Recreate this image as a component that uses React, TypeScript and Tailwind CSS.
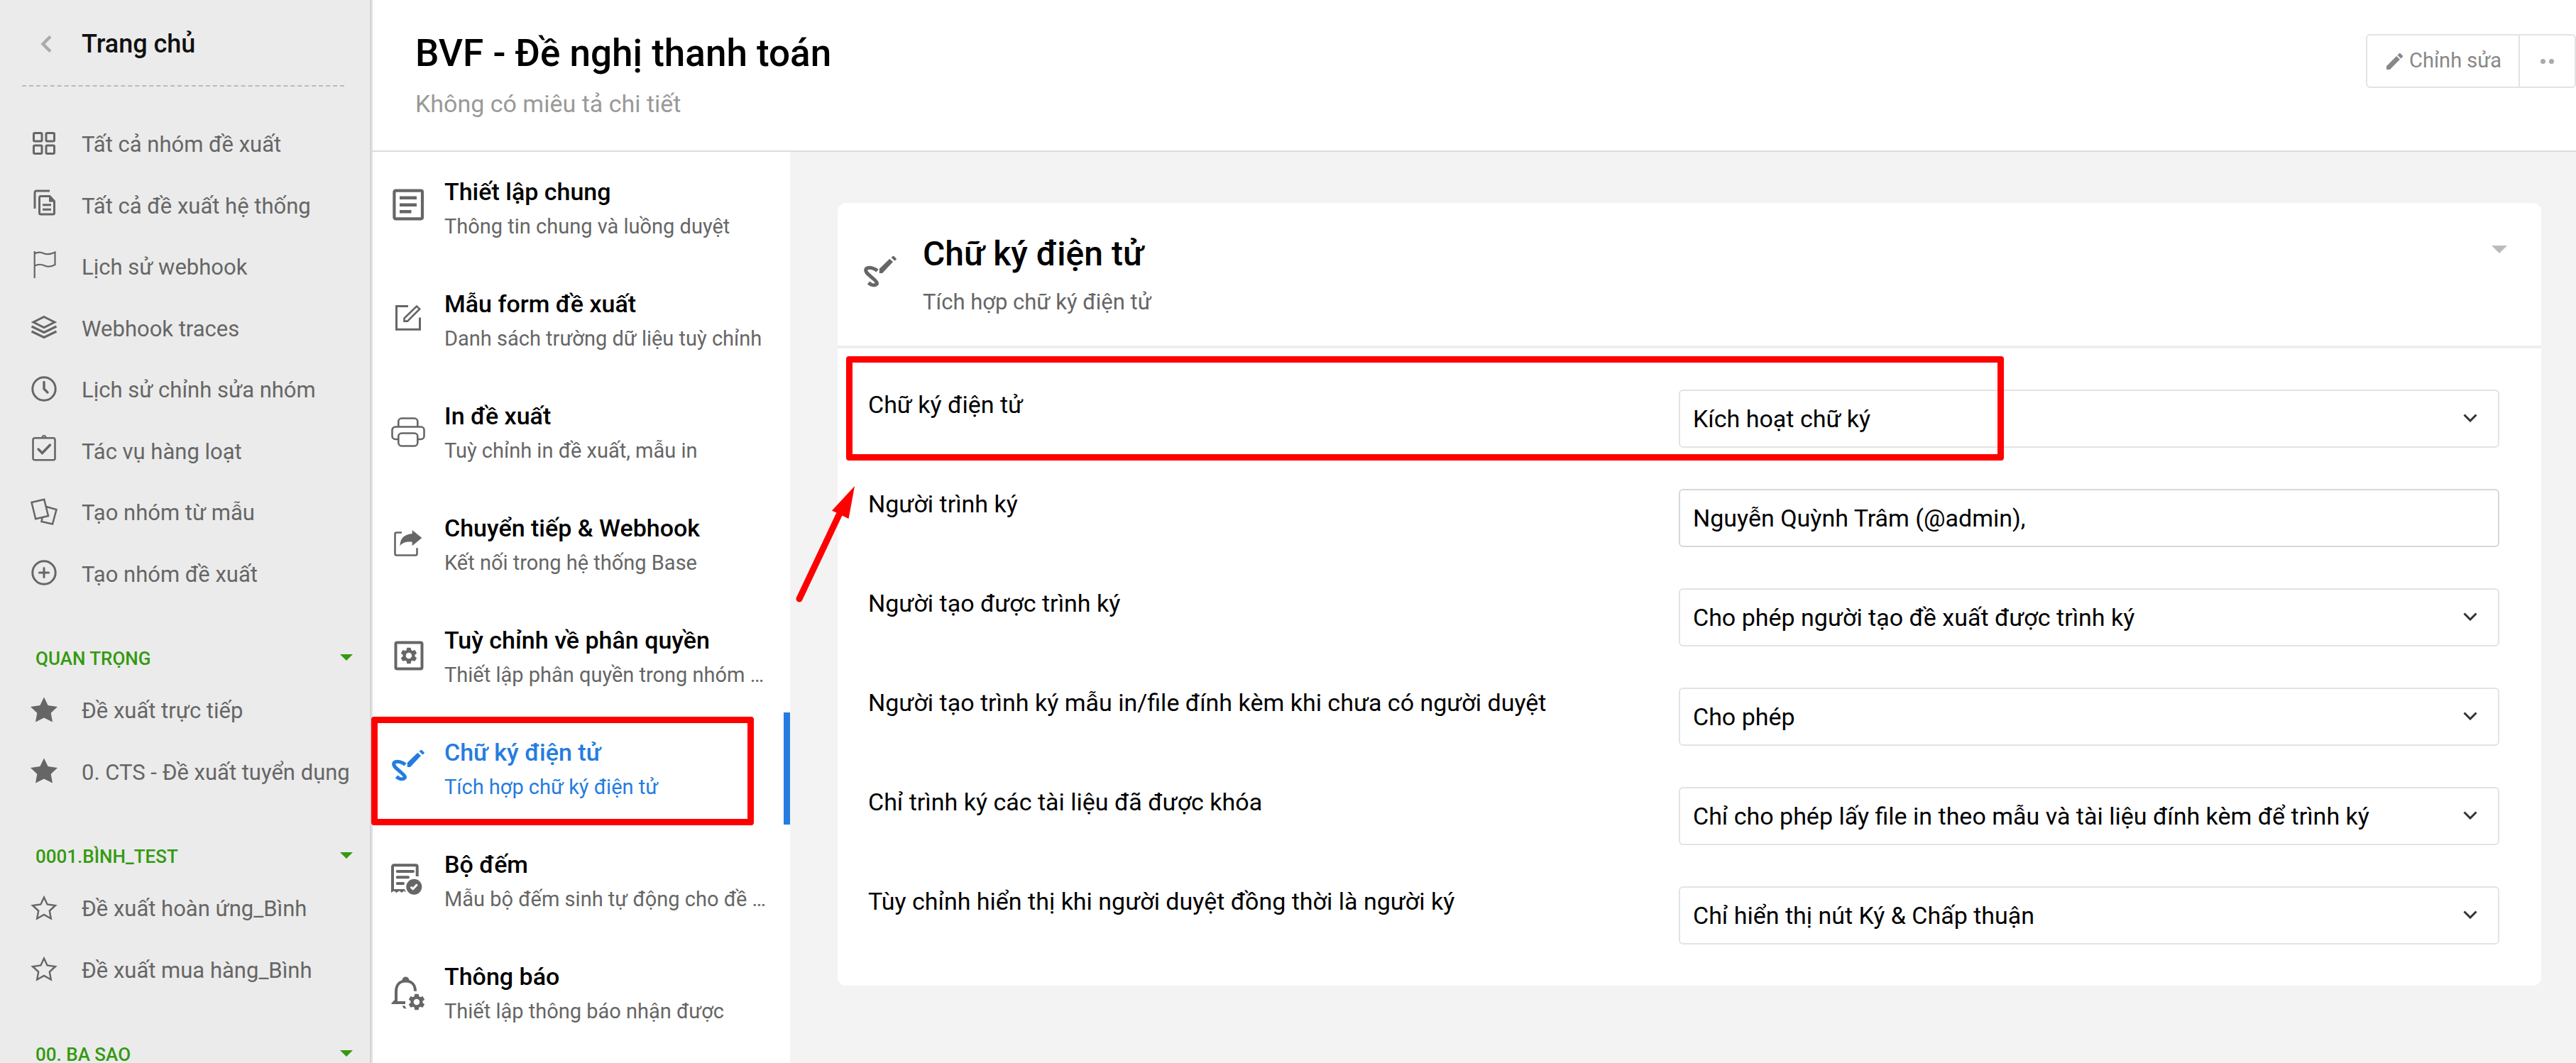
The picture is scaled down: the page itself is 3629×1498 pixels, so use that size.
import { useId, useState } from "react";
import type { ReactNode } from "react";

const GEAR_PATH =
  "M19.14 12.94c.04-.3.06-.61.06-.94 0-.32-.02-.64-.07-.94l2.03-1.58c.18-.14.23-.41.12-.61l-1.92-3.32c-.12-.22-.37-.29-.59-.22l-2.39.96c-.5-.38-1.03-.7-1.62-.94l-.36-2.54c-.04-.24-.24-.41-.48-.41h-3.84c-.24 0-.43.17-.47.41l-.36 2.54c-.59.24-1.13.57-1.62.94l-2.39-.96c-.22-.08-.47 0-.59.22L2.74 8.87c-.12.21-.08.47.12.61l2.03 1.58c-.05.3-.09.63-.09.94s.02.64.07.94l-2.03 1.58c-.18.14-.23.41-.12.61l1.92 3.32c.12.22.37.29.59.22l2.39-.96c.5.38 1.03.7 1.62.94l.36 2.54c.05.24.24.41.48.41h3.84c.24 0 .44-.17.47-.41l.36-2.54c.59-.24 1.13-.56 1.62-.94l2.39.96c.22.08.47 0 .59-.22l1.92-3.32c.12-.22.07-.47-.12-.61l-2.01-1.58zM12 15.6c-1.98 0-3.6-1.62-3.6-3.6s1.62-3.6 3.6-3.6 3.6 1.62 3.6 3.6-1.62 3.6-3.6 3.6z";

const STAR_PATH = "M19 1.5 24.6 13 38 15 28.7 23.8 31 36.5 19 30.4 7 36.5 9.3 23.8 0 15 13.4 13Z";
const STAR_OUTLINE_PATH = "M19 4.5 23.6 14.5 35 16 26.8 23.5 28.8 34.500 19 29 9.200 34.500 11.200 23.500 3 16 14.400 14.500Z";

function MenuIcon({ children }: { children: ReactNode }) {
  return (
    <svg viewBox="0 0 38 38" className="mb-[5px] size-[38px] shrink-0 overflow-visible" fill="none" stroke="currentColor" strokeWidth="3" aria-hidden="true">
      {children}
    </svg>
  );
}

function TabIcon({ children }: { children: ReactNode }) {
  return (
    <svg viewBox="0 0 48 48" className="size-12 shrink-0 overflow-visible" fill="none" stroke="currentColor" strokeWidth="2.6" aria-hidden="true">
      {children}
    </svg>
  );
}

function SignatureIcon() {
  return (
    <TabIcon>
      <path d="M20 22.5C16 19 8 16.5 4.5 19.5C1 24 9 29 14 33.5C18 37 21 40 18.5 41.8C15.5 44 11 42.5 7.5 39.5" strokeWidth="5" />
      <path d="M22.8 26V19.7L37.3 5.8 42 10 27 26Z" fill="currentColor" stroke="none" />
      <path d="M39.6 4 41.7 2.1Q42.5 1.5 43.2 2.1L46.6 5.2Q47.2 6 46.6 6.7L44.5 8.5Z" fill="currentColor" stroke="none" />
    </TabIcon>
  );
}

const MENU = [
  {
    label: "Tất cả nhóm đề xuất",
    icon: (
      <MenuIcon>
        <rect x="4.5" y="4.5" width="11.5" height="11.5" rx="1.5" />
        <rect x="22" y="4.5" width="11.5" height="11.5" rx="1.5" />
        <rect x="4.5" y="22" width="11.5" height="11.5" rx="1.5" />
        <rect x="22" y="22" width="11.5" height="11.5" rx="1.5" />
      </MenuIcon>
    ),
  },
  {
    label: "Tất cả đề xuất hệ thống",
    icon: (
      <MenuIcon>
        <path d="M6 25V2.500a2.500 2.500 0 0 1 2.500-2.500H27" />
        <path d="M14.500 7.500H27l6.500 7V31a2 2 0 0 1-2 2h-17a2 2 0 0 1-2-2V9.500a2 2 0 0 1 2-2Z" />
        <path d="M26 6.500v9h9Z" fill="currentColor" stroke="none" />
        <path d="M17 19.700h12M17 26.300h12" />
      </MenuIcon>
    ),
  },
  {
    label: "Lịch sử webhook",
    icon: (
      <MenuIcon>
        <path d="M5.700 -2V36M5.700 1.500C10 -1 14 -1 19 1.200S28 2.500 34.500 -.5V17C28 20.500 24 20.500 19.500 18.300S10 16.500 5.700 18.500" strokeWidth="2.200" />
      </MenuIcon>
    ),
  },
  {
    label: "Webhook traces",
    icon: (
      <MenuIcon>
        <path d="M19 4.500 34 12 19 19.500 4 12Z" />
        <path d="M1.500 18 19 26.500 36.500 18M1.500 25 19 33.500 36.500 25" strokeWidth="3.200" />
      </MenuIcon>
    ),
  },
  {
    label: "Lịch sử chỉnh sửa nhóm",
    icon: (
      <MenuIcon>
        <circle cx="19" cy="19" r="16.200" />
        <path d="M19 9.500V19l5 5" strokeWidth="3.400" strokeLinecap="round" />
      </MenuIcon>
    ),
  },
  {
    label: "Tác vụ hàng loạt",
    icon: (
      <MenuIcon>
        <rect x="3.500" y="2.200" width="31" height="31" rx="2.500" strokeWidth="2.600" />
        <path d="M16.500 1.500a2.500 2.500 0 0 1 5 0" strokeWidth="2" />
        <path d="M11 18l5.500 5.500L27.500 12" strokeWidth="3.400" strokeLinecap="round" />
      </MenuIcon>
    ),
  },
  {
    label: "Tạo nhóm từ mẫu",
    icon: (
      <MenuIcon>
        <path d="M1.500 6 19.200 1.800 25 25 7.200 29.200Z" strokeWidth="2.500" />
        <path d="M22 12 36.500 16 31 36.500 15.500 33 16.500 27.500" strokeWidth="2.500" />
      </MenuIcon>
    ),
  },
  {
    label: "Tạo nhóm đề xuất",
    icon: (
      <MenuIcon>
        <circle cx="19" cy="19" r="16.200" />
        <path d="M19 12.500v13M12.500 19h13" strokeLinecap="round" />
      </MenuIcon>
    ),
  },
];

const GROUPS = [
  { title: "QUAN TRỌNG", starred: true, items: ["Đề xuất trực tiếp", "0. CTS - Đề xuất tuyển dụng"] },
  { title: "0001.BÌNH_TEST", starred: false, items: ["Đề xuất hoàn ứng_Bình", "Đề xuất mua hàng_Bình"] },
  { title: "00. BA SAO", starred: false, items: [] },
];

const TABS = [
  {
    title: "Thiết lập chung",
    description: "Thông tin chung và luồng duyệt",
    icon: (
      <TabIcon>
        <rect x="4.400" y="3.700" width="39.600" height="39.600" rx="2" strokeWidth="4.200" />
        <path d="M12 13.700h24M12 23.700h24M12 33.300h16.500" strokeWidth="4.600" />
      </TabIcon>
    ),
  },
  {
    title: "Mẫu form đề xuất",
    description: "Danh sách trường dữ liệu tuỳ chỉnh",
    icon: (
      <TabIcon>
        <path d="M24 8.500H7.500V41.200H40.500V24.500" strokeWidth="3" />
        <path d="M18.500 25.500 36 8.500 40.200 12.500 23 29.600H18.500Z" />
      </TabIcon>
    ),
  },
  {
    title: "In đề xuất",
    description: "Tuỳ chỉnh in đề xuất, mẫu in",
    icon: (
      <TabIcon>
        <path d="M10.300 20V13a4.500 4.500 0 0 1 4.500-4.500h18a4.500 4.500 0 0 1 4.500 4.500v7" />
        <path d="M10.300 38H6a4.500 4.500 0 0 1-4.500-4.500v-8.500A4.500 4.500 0 0 1 6 20.500h36a4.500 4.500 0 0 1 4.500 4.500v8.500A4.500 4.500 0 0 1 42 38h-4.700" />
        <rect x="10.300" y="29.500" width="27" height="18" rx="4.500" />
      </TabIcon>
    ),
  },
  {
    title: "Chuyển tiếp & Webhook",
    description: "Kết nối trong hệ thống Base",
    icon: (
      <TabIcon>
        <path d="M15 11.500H7.500a2 2 0 0 0-2 2V41.500a2 2 0 0 0 2 2H34.500a2 2 0 0 0 2-2V33.300" />
        <path d="M29.700 8 43.300 19 29.700 30.300V24.700C22 24 16 25.500 12.300 30.300C13 19 19 14 29.700 13Z" fill="currentColor" stroke="none" />
      </TabIcon>
    ),
  },
  {
    title: "Tuỳ chỉnh về phân quyền",
    description: "Thiết lập phân quyền trong nhóm …",
    icon: (
      <TabIcon>
        <rect x="6.500" y="8.500" width="37" height="37" rx="2" strokeWidth="4" />
        <path d={GEAR_PATH} transform="translate(10.800 12.800) scale(1.180)" fill="currentColor" stroke="none" />
      </TabIcon>
    ),
  },
  { title: "Chữ ký điện tử", description: "Tích hợp chữ ký điện tử", icon: <SignatureIcon />, highlighted: true },
  {
    title: "Bộ đếm",
    description: "Mẫu bộ đếm sinh tự động cho đề …",
    icon: (
      <TabIcon>
        <path d="M2 42V8.300a2 2 0 0 1 2-2H34.700a2 2 0 0 1 2 2V22" strokeWidth="4" />
        <path d="M8.700 15H31M8.700 23.300H24M8.700 32H17" strokeWidth="4" strokeLinecap="round" />
        <path d="M0 40H19L21 44.500 18 42.500 15 45 11.500 42.500 7.500 45 4 42.500 0 45Z" fill="currentColor" stroke="none" />
        <circle cx="32.300" cy="36.700" r="11" fill="currentColor" stroke="none" />
        <path d="M27.700 36.700l3 3 6-6.300" stroke="white" strokeWidth="3" />
      </TabIcon>
    ),
  },
  {
    title: "Thông báo",
    description: "Thiết lập thông báo nhận được",
    icon: (
      <TabIcon>
        <path d="M7 42V26.500C7 17 12 11.500 20.500 11.500S34 17 34 25.700" strokeWidth="4" />
        <path d="M5 37V38L.5 42.500V44H20V40H9V37ZM16 46.200H19L21.500 50.500C18 50.500 16 49 16 46.200ZM15.500 10.500a5 5 0 1 1 10 0Z" fill="currentColor" stroke="none" />
        <path d={GEAR_PATH} transform="translate(21.800 26.800) scale(1.180)" fill="currentColor" stroke="none" />
      </TabIcon>
    ),
  },
];

const FIELDS = [
  { label: "Chữ ký điện tử", value: "Kích hoạt chữ ký", type: "select", highlighted: true },
  { label: "Người trình ký", value: "Nguyễn Quỳnh Trâm (@admin),", type: "text" },
  { label: "Người tạo được trình ký", value: "Cho phép người tạo đề xuất được trình ký", type: "select" },
  { label: "Người tạo trình ký mẫu in/file đính kèm khi chưa có người duyệt", value: "Cho phép", type: "select" },
  { label: "Chỉ trình ký các tài liệu đã được khóa", value: "Chỉ cho phép lấy file in theo mẫu và tài liệu đính kèm để trình ký", type: "select" },
  { label: "Tùy chỉnh hiển thị khi người duyệt đồng thời là người ký", value: "Chỉ hiển thị nút Ký & Chấp thuận", type: "select" },
];

function Caret({ className }: { className: string }) {
  return (
    <svg viewBox="0 0 20 10" className={className} fill="currentColor" aria-hidden="true">
      <path d="M0 0H20L10 10Z" />
    </svg>
  );
}

function Sidebar() {
  return (
    <aside className="w-[525px] shrink-0 overflow-hidden border-r-2 border-[#e2e2e2] bg-[#ebebeb] text-[#666]">
      <div className="h-full border-r-2 border-[#d5d5d5]">
        <div className="mr-9 ml-[31px] flex h-[122px] items-center border-b-2 border-dashed border-[#bbb] pt-1">
          <a href="#home" className="flex items-center text-[36px] font-medium leading-[44px] text-[#111]">
            <svg viewBox="0 0 16 26" className="mr-[42px] ml-[26px] h-[26px] w-4 text-[#aaa]" fill="none" stroke="currentColor" strokeWidth="4.5" aria-hidden="true">
              <path d="M14 2.5 3.5 13 14 23.5" />
            </svg>
            Trang chủ
          </a>
        </div>
        <nav className="mt-[39px] grid h-[692px] auto-rows-fr">
          {MENU.map((item) => (
            <a key={item.label} href="#menu" className="flex items-center gap-[34px] pl-[43px] text-[31px] leading-10 whitespace-nowrap">
              {item.icon}
              {item.label}
            </a>
          ))}
        </nav>
        {GROUPS.map((group) => (
          <section key={group.title}>
            <button type="button" className="flex w-full items-center justify-between pt-[65px] pr-6 pb-[21px] pl-[50px] text-[26px] font-medium leading-5 text-[#339a0f]">
              {group.title}
              <Caret className="mb-1 h-[9px] w-[18px]" />
            </button>
            {group.items.length > 0 && (
              <div className="grid h-[173px] auto-rows-fr">
                {group.items.map((item) => (
                  <a key={item} href="#group" className="flex items-center gap-[34px] pl-[43px] text-[31px] leading-10 whitespace-nowrap">
                    <MenuIcon>
                      {group.starred ? <path d={STAR_PATH} fill="currentColor" stroke="none" /> : <path d={STAR_OUTLINE_PATH} strokeWidth="2.4" />}
                    </MenuIcon>
                    {item}
                  </a>
                ))}
              </div>
            )}
          </section>
        ))}
      </div>
    </aside>
  );
}

function Field({ label, value, type, highlighted }: { label: string; value: string; type: string; highlighted?: boolean }) {
  const id = useId();
  return (
    <div className="relative grid grid-cols-[1142fr_1156fr]">
      <label htmlFor={id} className="text-[34px] leading-[42px]">{label}</label>
      <div className="relative">
        {type === "text" ? (
          <input id={id} type="text" defaultValue={value} className="h-[82px] w-full rounded-md border-2 border-[#d8d8d8] bg-white px-[18px] text-[34px] outline-none" />
        ) : (
          <>
            <select id={id} defaultValue={value} className="h-[82px] w-full appearance-none rounded-md border-2 border-[#e3e3e3] bg-white px-[18px] text-[34px] outline-none">
              <option>{value}</option>
            </select>
            <svg viewBox="0 0 20 12" className="pointer-events-none absolute top-[34px] right-[31px] h-3 w-5" fill="none" stroke="#333" strokeWidth="3" aria-hidden="true">
              <path d="M1.5 1.5 10 10 18.5 1.5" />
            </svg>
          </>
        )}
      </div>
      {highlighted && (
        <>
          <div className="pointer-events-none absolute -top-[47px] -left-[31px] h-[147px] w-[1631px] rounded border-[9px] border-[#f00]" />
          <svg viewBox="0 0 90 170" className="pointer-events-none absolute top-[134px] -left-[104px] h-[170px] w-[90px]" aria-hidden="true">
            <path d="M7 161 66 36" stroke="#f00" strokeWidth="9" strokeLinecap="round" />
            <path d="M85 2 53 36.5 76.5 48Z" fill="#f00" />
          </svg>
        </>
      )}
    </div>
  );
}

export default function App() {
  const [activeTab, setActiveTab] = useState("Chữ ký điện tử");

  return (
    <div className="flex h-screen overflow-hidden bg-white font-[Roboto,sans-serif] text-black">
      <Sidebar />
      <div className="flex min-w-0 flex-1 flex-col">
        <header className="flex h-[214px] shrink-0 items-start justify-between border-b-2 border-[#ddd] pl-[60px]">
          <div className="pt-[43px]">
            <h1 className="text-[53px] font-medium leading-[64px]">BVF - Đề nghị thanh toán</h1>
            <p className="mt-[18px] text-[34px] leading-[42px] text-[#999]">Không có miêu tả chi tiết</p>
          </div>
          <div className="mt-12 flex h-[76px] rounded-md border-2 border-[#e3e3e3] text-[29px] text-[#888]">
            <button type="button" className="flex items-center gap-[9px] pr-6 pl-[27px]">
              <svg viewBox="3 3 18 18" className="size-[23px]" fill="currentColor" aria-hidden="true">
                <path d="M3 17.25V21h3.75L17.81 9.94l-3.75-3.75L3 17.25zM20.71 7.04c.39-.39.39-1.02 0-1.41l-2.34-2.34a.996.996 0 0 0-1.41 0l-1.83 1.83 3.75 3.75 1.83-1.83z" />
              </svg>
              Chỉnh sửa
            </button>
            <button type="button" aria-label="Thêm" className="flex w-[79px] items-center justify-center gap-[5px] border-l-2 border-[#e3e3e3]">
              <span className="size-[7px] rounded-full bg-[#aaa]" />
              <span className="size-[7px] rounded-full bg-[#aaa]" />
            </button>
          </div>
        </header>

        <div className="flex min-h-0 flex-1">
          <nav className="w-[588px] shrink-0">
            {TABS.map((tab) => {
              const active = tab.title === activeTab;
              return (
                <button
                  key={tab.title}
                  type="button"
                  onClick={() => setActiveTab(tab.title)}
                  className={active ? "relative flex h-[158px] w-full gap-[27px] border-r-[9px] border-[#257ce0] pl-[26px] text-left text-[#257ce0]" : "relative flex h-[158px] w-full gap-[27px] pl-[26px] text-left"}
                >
                  <span className={active ? "mt-[51px]" : "mt-[51px] text-[#666]"}>{tab.icon}</span>
                  <span className="mt-[34px] block whitespace-nowrap">
                    <span className="block text-[34px] font-medium leading-[44px]">{tab.title}</span>
                    <span className={active ? "mt-[7px] block text-[29px] leading-10" : "mt-[7px] block text-[29px] leading-10 text-[#666]"}>{tab.description}</span>
                  </span>
                  {tab.highlighted && <span className="pointer-events-none absolute top-[6px] -left-[2px] h-[153px] w-[539px] rounded border-[9px] border-[#f00]" />}
                </button>
              );
            })}
          </nav>

          <main className="min-w-0 flex-1 bg-[#f3f3f3] pt-[72px] pr-[49px] pl-[67px]">
            <section className="rounded-xl bg-white">
              <div className="flex h-[205px] items-start border-b-4 border-[#eee] pr-12 pl-9">
                <span className="mt-[73px] text-[#666]"><SignatureIcon /></span>
                <div className="ml-9 flex-1 pt-[44px]">
                  <h2 className="text-[48px] font-medium leading-[56px]">Chữ ký điện tử</h2>
                  <p className="mt-5 text-[31px] leading-10 text-[#666]">Tích hợp chữ ký điện tử</p>
                </div>
                <button type="button" aria-label="Thu gọn" className="mt-[60px]">
                  <Caret className="h-[11px] w-[22px] text-[#bbb]" />
                </button>
              </div>
              <form className="flex flex-col gap-[58px] pt-[58px] pr-[59px] pb-[58px] pl-[43px]">
                {FIELDS.map((field) => <Field key={field.label} {...field} />)}
              </form>
            </section>
          </main>
        </div>
      </div>
    </div>
  );
}
